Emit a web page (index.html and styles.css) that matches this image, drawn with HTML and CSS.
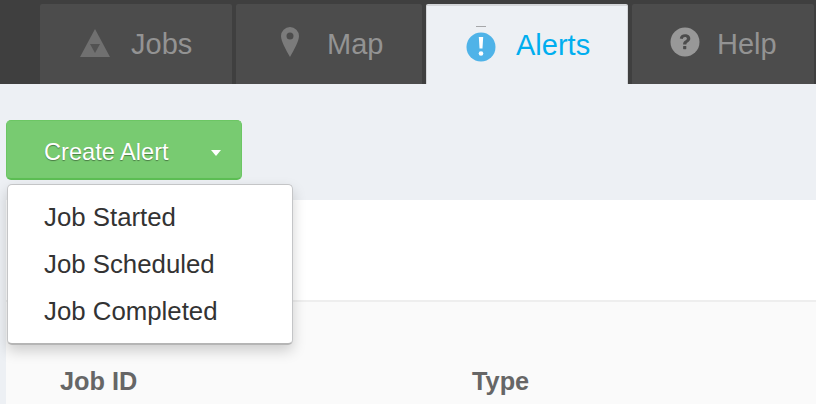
FILE: index.html
```html
<!DOCTYPE html>
<html lang="en">
<head>
<meta charset="utf-8">
<title>Alerts</title>
<link rel="stylesheet" href="styles.css">
</head>
<body>
<nav class="nav">
  <a class="tab tab-jobs">
    <svg class="icon icon-jobs" viewBox="0 0 30 28"><path d="M15 0 30 28H0Z" fill="#707070"/><path d="M10 15h10L15 24Z" fill="#535353"/></svg>
    <span>Jobs</span>
  </a>
  <a class="tab tab-map">
    <svg class="icon icon-map" viewBox="0 0 18 30"><path fill-rule="evenodd" d="M9 0a9 9 0 0 1 9 9c0 5-5 14-9 21C5 23 0 14 0 9a9 9 0 0 1 9-9Zm0 5.500a3.500 3.500 0 1 0 0 7 3.500 3.500 0 0 0 0-7Z" fill="#7b7b7b"/></svg>
    <span>Map</span>
  </a>
  <a class="tab tab-alerts">
    <svg class="icon icon-alerts" viewBox="0 0 30 36"><path d="M10 0h10v.6H10Z" fill="#777"/><circle cx="15" cy="21" r="14.500" fill="#4fb3e8"/><path d="M12.800 11h4.400l-.7 11.500h-3Z" fill="#fff"/><circle cx="15" cy="27.500" r="2.300" fill="#fff"/></svg>
    <span>Alerts</span>
  </a>
  <a class="tab tab-help">
    <svg class="icon icon-help" viewBox="0 0 30 30"><circle cx="15" cy="15" r="14.500" fill="#989898"/><path d="M9.800 11.500c.3-2.900 2.400-4.300 5.300-4.300 3 0 5.200 1.600 5.200 4.200 0 3.500-4 3.500-4 6.100h-3.200c0-3.900 3.800-3.900 3.800-5.900 0-1-.8-1.600-1.900-1.600-1.200 0-2 .7-2.200 1.900Z" fill="#4c4c4c"/><rect x="13.100" y="19" width="3.200" height="3.200" rx=".6" fill="#4c4c4c"/></svg>
    <span>Help</span>
  </a>
</nav>
<main class="content">
  <div class="toolbar">
    <button class="create-btn"><span>Create Alert</span><i class="caret"></i></button>
  </div>
  <ul class="menu">
    <li>Job Started</li>
    <li>Job Scheduled</li>
    <li>Job Completed</li>
  </ul>
  <section class="panel">
    <div class="panel-top"></div>
    <div class="table-head">
      <div class="col-id">Job ID</div>
      <div class="col-type">Type</div>
    </div>
  </section>
</main>
</body>
</html>
```
FILE: styles.css
```css
* { box-sizing: border-box; }
html, body { margin: 0; height: 404px; overflow: hidden; }
body { font-family: "Liberation Sans", Arial, sans-serif; background: #edf0f4; }

.nav {
  height: 84px;
  background: #3f3f3f;
  display: flex;
  gap: 4px;
  padding: 4px 0 0 40px;
}
.tab {
  display: flex;
  align-items: center;
  height: 80px;
  background: #4c4c4c;
  border-radius: 2px 2px 0 0;
  color: #939393;
  font-size: 29px;
}
.tab span { display: block; }
.tab-jobs { width: 192px; padding-left: 40px; }
.tab-map { width: 186px; padding-left: 45px; }
.tab-alerts {
  width: 202px;
  padding-left: 39px;
  background: #edf0f4;
  color: #00aeef;
  border: 1px solid #d4d6d9;
  border-width: 2px 1px 0;
}
.tab-help { width: 182px; padding-left: 38px; }
.icon { display: block; flex: none; }
.icon-jobs { width: 30px; height: 28px; margin: -3px 21px 0 0; }
.icon-map { width: 18px; height: 30px; margin: -4px 28px 0 0; }
.icon-alerts { width: 30px; height: 36px; margin: -2px 20px 0 0; }
.icon-help { width: 30px; height: 30px; margin: -4px 17px 0 0; }

.content { position: relative; padding-top: 36px; }
.toolbar { padding-left: 6px; height: 80px; }
.create-btn {
  display: flex;
  align-items: center;
  width: 236px;
  height: 60px;
  padding: 6px 0 0 37px;
  background: #78cb71;
  border: 1px solid #6cc664;
  border-bottom: 2px solid #5dbf54;
  border-radius: 5px;
  color: #fff;
  font: 23.600px "Liberation Sans", Arial, sans-serif;
  text-shadow: 0 1px 1px rgba(0, 0, 0, .4);
}
.caret {
  width: 0;
  height: 0;
  margin: 0 0 0 42px;
  border: 5.500px solid transparent;
  border-top: 6px solid #fff;
  border-bottom: 0;
}
.menu {
  position: absolute;
  left: 7px;
  top: 100px;
  z-index: 2;
  width: 286px;
  height: 161px;
  margin: 0;
  padding: 9px 0 0 36px;
  list-style: none;
  background: #fff;
  border: 1px solid #c4c5c7;
  border-bottom: 2px solid #b5b5b5;
  border-radius: 5px;
  box-shadow: 0 6px 14px rgba(0, 0, 0, .18);
  color: #333;
  font-size: 25.800px;
}
.menu li { height: 47px; line-height: 47px; }
.panel { margin-left: 6px; height: 204px; background: #fff; }
.panel-top { height: 102px; border-bottom: 2px solid #eeeeee; }
.table-head {
  display: flex;
  height: 102px;
  padding: 65px 0 0 54px;
  background: #fafafa;
  color: #666;
  font-size: 25.300px;
  font-weight: bold;
}
.col-id { width: 412px; }
```
